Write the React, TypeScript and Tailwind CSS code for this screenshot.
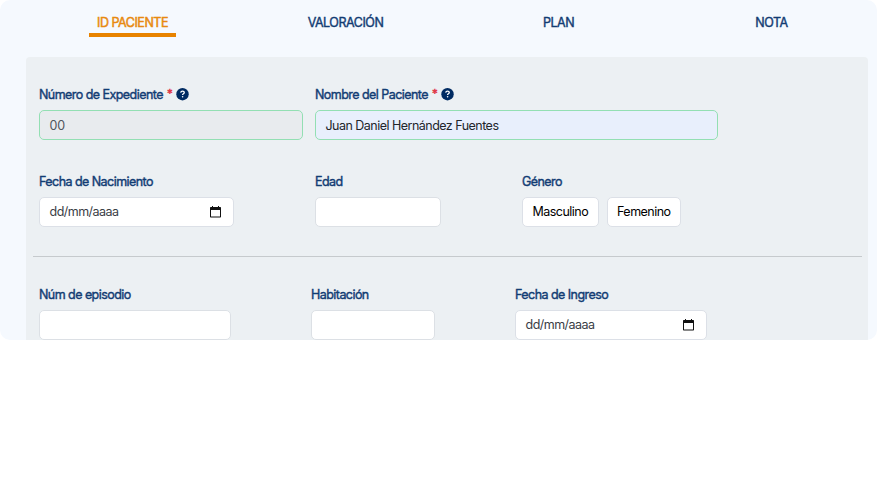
import type { ReactNode } from "react";

const tabs = ["ID PACIENTE", "VALORACIÓN", "PLAN", "NOTA"];

function HelpIcon() {
  return (
    <svg viewBox="0 0 13 13" className="ml-[3.5px] h-[13px] w-[13px] shrink-0" fill="none">
      <circle cx="6.500" cy="6.200" r="6.200" fill="#002b62" />
      <path d="M4.700 4.700C4.900 3.600 5.600 3.200 6.500 3.200c1 0 1.800.5 1.800 1.400 0 1.200-1.700 1.100-1.700 2.300" stroke="#fff" strokeWidth="1.300" />
      <circle cx="6.600" cy="8.800" r=".8" fill="#fff" />
    </svg>
  );
}

function CalendarIcon() {
  return (
    <svg viewBox="0 0 11 12" className="h-3 w-[11px]" fill="#111">
      <path fillRule="evenodd" d="M2 0h1v1h5V0h1v1h1.300q.7 0 .7.700v9.100q0 .7-.7.700H.7q-.7 0-.7-.7V1.700Q0 1 .7 1H2zM1 4v6.500h9V4z" />
    </svg>
  );
}

function Field({ label, className, required, children }: { label: string; className: string; required?: boolean; children: ReactNode }) {
  return (
    <div className={`shrink-0 ${className}`}>
      <div className="flex h-4 items-center text-[12.5px] tracking-[-0.55px] whitespace-pre text-[#123c73]">
        <span className="pt-px leading-[17px] [-webkit-text-stroke:0.4px_#123c73]">{label}</span>
        {required && (
          <>
            <span className="ml-1 pt-px text-[11.5px] leading-[17px] text-[#e03444] [-webkit-text-stroke:0.4px_#e03444]">*</span>
            <HelpIcon />
          </>
        )}
      </div>
      <div className="mt-2">{children}</div>
    </div>
  );
}

const box = "flex h-[30px] items-center rounded-[5px] border pr-2 pl-[9.5px] text-[12.5px] tracking-[-0.52px] whitespace-nowrap";

function DateBox() {
  return (
    <div className={`${box} justify-between border-[#dce0e7] bg-white text-[#3b4046]`}>
      <span className="pt-px">dd/mm/aaaa</span>
      <span className="mr-1"><CalendarIcon /></span>
    </div>
  );
}

function EmptyBox() {
  return <div className={`${box} border-[#dce0e5] bg-white`} />;
}

export default function App() {
  return (
    <div className="h-[477px] w-[878px] overflow-hidden bg-white font-['Inter','Liberation_Sans',sans-serif]">
      <main className="h-[340px] w-[877px] overflow-hidden rounded-[10px] bg-[#f5f9fe] pr-[9px] pl-[26px]">
        <nav className="grid h-[57px] grid-cols-[213px_213px_213px_213px] items-start">
          {tabs.map((tab, i) => (
            <div key={tab} className="flex justify-center pt-[13px]">
              <span className={`h-6 border-b-4 px-2 text-[12.5px] leading-[19px] tracking-[-0.47px] ${i === 0 ? "border-[#e88300] text-[#e88a10] [-webkit-text-stroke:0.5px_#e88a10]" : "border-transparent text-[#123c73] [-webkit-text-stroke:0.4px_#123c73]"}`}>
                {tab}
              </span>
            </div>
          ))}
        </nav>
        <section className="h-[283px] w-[842px] overflow-hidden rounded-t-[4px] bg-[#ecf0f3] pt-[29px]">
          <div className="flex pl-[13px]">
            <Field label="Número de Expediente" required className="mr-3 w-[264px]">
              <div className={`${box} border-[#93dfb3] bg-[#e8ebee] pt-[2px] text-[#50565c]`}><span className="tracking-[-0.1px]">00</span></div>
            </Field>
            <Field label="Nombre del Paciente" required className="w-[403px]">
              <div className={`${box} border-[#93dfb3] bg-[#e8effc] pt-[2px] text-[#22262c]`}>Juan Daniel Hernández Fuentes</div>
            </Field>
          </div>
          <div className="mt-[33px] flex pl-[13px]">
            <Field label="Fecha de Nacimiento" className="mr-[81px] w-[195px]"><DateBox /></Field>
            <Field label="Edad" className="mr-[81px] w-[126px]"><EmptyBox /></Field>
            <Field label="Género" className="w-[160px]">
              <div className="flex gap-2">
                <div className={`${box} w-[76.5px] border-[#dce0e7] bg-white pt-px text-black`}>Masculino</div>
                <div className={`${box} w-[74px] border-[#dce0e7] bg-white pt-px text-black`}>Femenino</div>
              </div>
            </Field>
          </div>
          <hr className="mx-[6.5px] mt-[29px] border-[#c6cacd]" />
          <div className="mt-[29px] flex pl-[13px]">
            <Field label="Núm de episodio" className="mr-[80.5px] w-[191.5px]"><EmptyBox /></Field>
            <Field label="Habitación" className="mr-[80px] w-[124px]"><EmptyBox /></Field>
            <Field label="Fecha de Ingreso" className="w-[192px]"><DateBox /></Field>
          </div>
        </section>
      </main>
    </div>
  );
}
